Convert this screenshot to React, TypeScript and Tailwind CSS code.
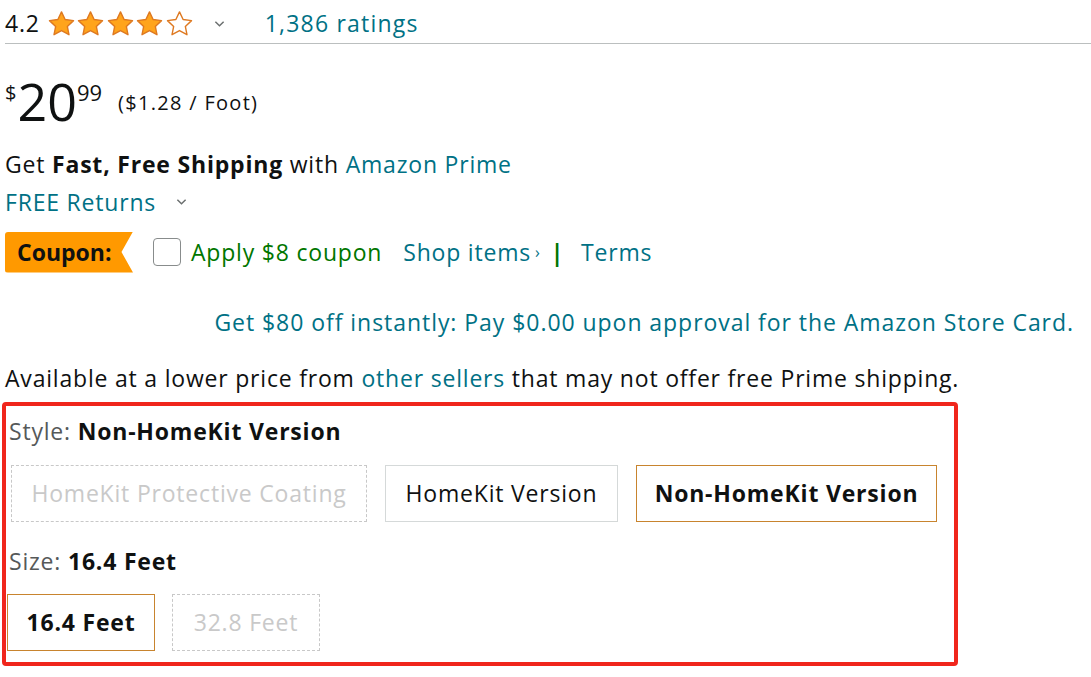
import React from 'react';

const font = "font-['Open_Sans','Noto_Sans',sans-serif]";

const Star: React.FC<{ filled: boolean }> = ({ filled }) => (
  <svg viewBox="0 0 24 24" className="w-[29px] h-[28px]">
    <path
      d="M12 1.6l3.1 6.6 7.2.9-5.3 5 1.4 7.1-6.4-3.6-6.4 3.6 1.4-7.1-5.3-5 7.2-.9z"
      fill={filled ? '#ffa41c' : '#ffffff'}
      stroke="#de7921"
      strokeWidth="1.2"
      strokeLinejoin="round"
    />
  </svg>
);

const Chevron: React.FC<{ className?: string }> = ({ className }) => (
  <svg viewBox="0 0 12 8" className={className}>
    <path d="M1.5 1.5l4.5 4.5 4.5-4.5" fill="none" stroke="#6b6f6f" strokeWidth="1.6" />
  </svg>
);

interface OptionProps {
  label: string;
  state: 'selected' | 'available' | 'unavailable';
  className?: string;
}

const Option: React.FC<OptionProps> = ({ label, state, className }) => {
  const styles = {
    selected: 'border border-[#c8842e] font-bold text-[#0f1111]',
    available: 'border border-[#d5d9d9] text-[#0f1111]',
    unavailable: 'border border-dashed border-[#c8c8c8] text-[#c9c9c9]',
  };
  return (
    <div className={`h-[57px] flex items-center justify-center text-[23px] ${styles[state]} ${className ?? ''}`}>
      {label}
    </div>
  );
};

export default function App() {
  return (
    <div className={`w-[1091px] h-[677px] bg-white text-[#0f1111] tracking-[0.8px] overflow-hidden ${font}`}>
      {/* rating row */}
      <div className="ml-[5px] h-[44px] pt-[4px] flex items-center border-b border-[#bbbfbf]">
        <span className="text-[23px] leading-none">4.2</span>
        <div className="flex ml-[7px] gap-[0.5px]">
          {[0, 1, 2, 3, 4].map((i) => (
            <Star key={i} filled={i < 4} />
          ))}
        </div>
        <Chevron className="w-[11px] h-[8px] ml-[20px]" />
        <span className="ml-[40px] text-[23px] leading-none tracking-[1.2px] text-[#007185]">1,386 ratings</span>
      </div>

      {/* price */}
      <div className="ml-[5px] mt-[36px] flex items-start h-[50px] tracking-normal">
        <span className="text-[20px] leading-none mt-[3px]">$</span>
        <span className="text-[52px] leading-[42px] ml-[1px]">20</span>
        <span className="text-[22px] leading-none mt-[1px]">99</span>
        <span className="ml-[16px] mt-[13px] text-[20px] leading-none tracking-[1.3px]">($1.28 / Foot)</span>
      </div>

      <div className="ml-[5px] mt-[16px] text-[23px] leading-[36px]">
        Get <span className="font-bold">Fast, Free Shipping</span> with{' '}
        <span className="text-[#007185]">Amazon Prime</span>
      </div>
      <div className="ml-[5px] mt-[2px] flex items-center text-[23px] leading-[36px] text-[#007185]">
        FREE Returns
        <Chevron className="w-[11px] h-[8px] ml-[20px]" />
      </div>

      {/* coupon row */}
      <div className="ml-[5px] mt-[11px] flex items-center h-[42px]">
        <div className="w-[128px] h-[41px] bg-[#ff9900] rounded-l-[3px] flex items-center pl-[12px] [clip-path:polygon(0_0,100%_0,91%_50%,100%_100%,0_100%)]">
          <span className="text-[23px] font-bold leading-none tracking-normal">Coupon:</span>
        </div>
        <div className="ml-[20px] w-[28px] h-[28px] border border-[#888c8c] rounded-[4px] bg-white" />
        <span className="ml-[10px] text-[23px] text-[#007600]">Apply $8 coupon</span>
        <span className="ml-[21px] text-[23px] text-[#007185]">Shop items</span>
        <span className="ml-[4px] text-[16px] text-[#007185]">›</span>
        <span className="ml-[10px] text-[23px] font-bold text-[#007600]">|</span>
        <span className="ml-[17px] text-[23px] text-[#007185]">Terms</span>
      </div>

      <div className="mt-[31px] pr-[17px] text-right text-[23px] leading-[36px] tracking-[0.95px] text-[#007185]">
        Get $80 off instantly: Pay $0.00 upon approval for the Amazon Store Card.
      </div>

      <div className="ml-[5px] mt-[20px] text-[23px] leading-[36px]">
        Available at a lower price from <span className="text-[#007185]">other sellers</span> that may not offer
        free Prime shipping.
      </div>

      {/* variations box */}
      <div className="ml-[2px] mt-[6px] w-[956px] h-[264px] border-[4px] border-[#f0261c] rounded-[4px] flex flex-col">
        <div className="ml-[3px] mt-[10px] text-[23px] leading-[30px]">
          <span className="text-[#565959]">Style: </span>
          <span className="font-bold">Non-HomeKit Version</span>
        </div>
        <div className="flex mt-[19px] ml-[5px] gap-[18px]">
          <Option label="HomeKit Protective Coating" state="unavailable" className="w-[356px]" />
          <Option label="HomeKit Version" state="available" className="w-[233px]" />
          <Option label="Non-HomeKit Version" state="selected" className="w-[301px]" />
        </div>
        <div className="ml-[3px] mt-[24px] text-[23px] leading-[30px]">
          <span className="text-[#565959]">Size: </span>
          <span className="font-bold">16.4 Feet</span>
        </div>
        <div className="flex mt-[18px] ml-[1px] gap-[17px]">
          <Option label="16.4 Feet" state="selected" className="w-[148px]" />
          <Option label="32.8 Feet" state="unavailable" className="w-[148px]" />
        </div>
      </div>
    </div>
  );
}
